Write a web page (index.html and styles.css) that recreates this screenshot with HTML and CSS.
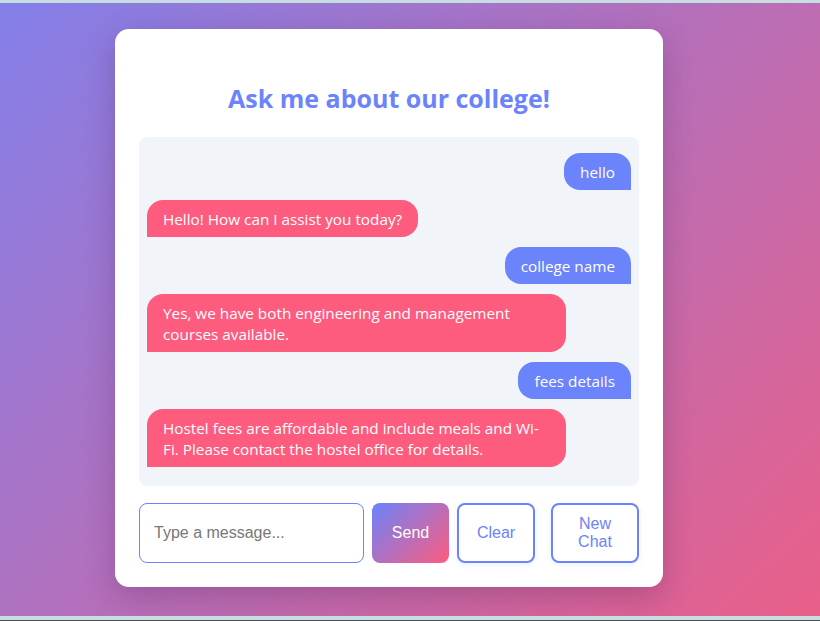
FILE: index.html
```html
<!DOCTYPE html>
<html lang="en">
<head>
<meta charset="utf-8">
<title>College Chatbot</title>
<link rel="stylesheet" href="styles.css">
</head>
<body>
<div class="page">
  <div class="card">
    <h2 class="title">Ask me about our college!</h2>
    <div class="chat">
      <div class="msg user">hello</div>
      <div class="msg bot">Hello! How can I assist you today?</div>
      <div class="msg user">college name</div>
      <div class="msg bot">Yes, we have both engineering and management courses available.</div>
      <div class="msg user">fees details</div>
      <div class="msg bot">Hostel fees are affordable and include meals and Wi-Fi. Please contact the hostel office for details.</div>
    </div>
    <div class="controls">
      <input class="input" type="text" placeholder="Type a message..." autofocus>
      <button class="btn send">Send</button>
      <button class="btn outline clear">Clear</button>
      <button class="btn outline newchat">New Chat</button>
    </div>
  </div>
</div>
<div class="bottom-strip"></div>
</body>
</html>
```
FILE: styles.css
```css
html {
  background: #c7dde1;
}
body {
  margin: 0;
  padding-top: 3px;
  font-family: "Open Sans", "Noto Sans", sans-serif;
}
.page {
  height: 613px;
  background: linear-gradient(135deg, #837fe9 0%, #e95f89 100%);
  overflow: hidden;
}
.bottom-strip {
  height: 4px;
  border-bottom: 1px solid #4a4f55;
  background: #c7dde1;
}
.card {
  margin: 26px 0 0 115px;
  width: 548px;
  height: 558px;
  box-sizing: border-box;
  padding: 24px;
  background: #fff;
  border-radius: 14px;
  box-shadow: 0 10px 30px rgba(60, 20, 80, 0.25);
}
.title {
  margin: 29px 0 23px;
  height: 32px;
  line-height: 32px;
  text-align: center;
  font-size: 25px;
  font-weight: 700;
  color: #6b83fb;
}
.chat {
  height: 349px;
  box-sizing: border-box;
  padding: 16px 8px;
  background: #f1f5f9;
  border-radius: 8px;
  display: flex;
  flex-direction: column;
  gap: 10px;
  overflow: hidden;
}
.msg {
  max-width: 419px;
  box-sizing: border-box;
  padding: 9px 16px 7px;
  font-size: 15.3px;
  line-height: 21px;
  color: #fff;
}
.user {
  align-self: flex-end;
  background: #6b83fb;
  border-radius: 16px 16px 0 16px;
}
.bot {
  align-self: flex-start;
  background: #fd5c7e;
  border-radius: 16px 16px 16px 0;
}
.controls {
  display: flex;
  gap: 8px;
  margin-top: 17px;
  height: 60px;
}
.input {
  flex: 1;
  min-width: 0;
  box-sizing: border-box;
  border: 1px solid #6b83fb;
  border-radius: 8px;
  padding: 0 14px;
  font-family: "Liberation Sans", Arial, sans-serif;
  font-size: 16px;
  color: #333;
  outline: none;
}
.input::placeholder {
  color: #777;
}
.btn {
  box-sizing: border-box;
  border-radius: 8px;
  font-family: "Liberation Sans", Arial, sans-serif;
  font-size: 16px;
  line-height: 18px;
  cursor: pointer;
  padding: 0;
}
.send {
  width: 77px;
  border: none;
  color: #fff;
  background: linear-gradient(135deg, #6b83fb 0%, #fd5c7e 100%);
}
.outline {
  border: 2px solid #6b83fb;
  background: #fff;
  color: #6b83fb;
  box-shadow: 0 2px 6px rgba(107, 131, 251, 0.12);
}
.clear {
  width: 78px;
}
.newchat {
  width: 88px;
  margin-left: 8px;
  padding: 0 16px;
}
```
